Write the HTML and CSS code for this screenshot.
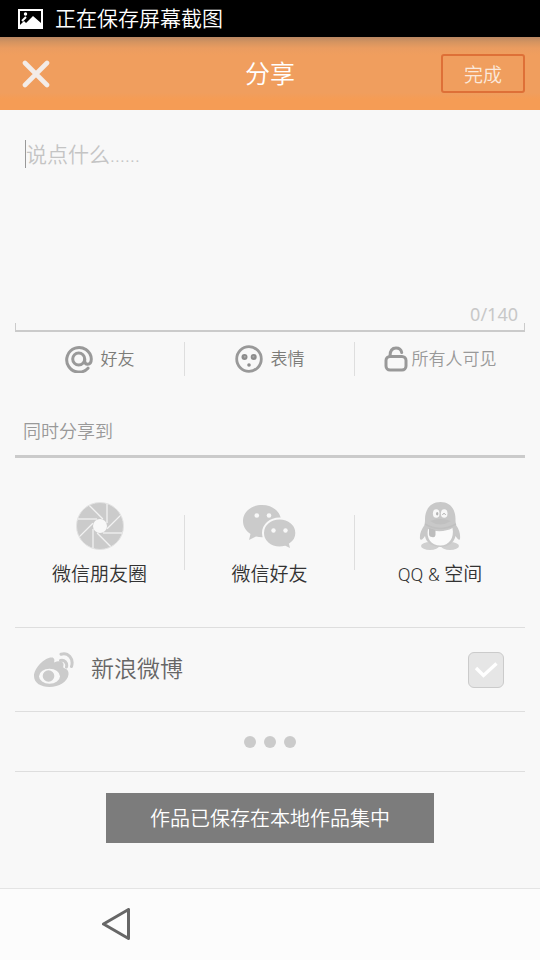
FILE: index.html
```html
<!DOCTYPE html>
<html lang="zh-CN">
<head>
<meta charset="utf-8">
<meta name="viewport" content="width=device-width, initial-scale=1">
<title>分享</title>
<link rel="stylesheet" href="styles.css">
</head>
<body>
<div class="status">
  <svg width="26" height="20" viewBox="0 0 26 20" aria-hidden="true">
    <rect x="1" y="1" width="23" height="18" fill="none" stroke="#fff" stroke-width="2"/>
    <path d="M2 18V16L6 12L8 14L15 7L23 14V18Z" fill="#fff"/>
    <path d="M4 12L8 8" stroke="#fff" stroke-width="2"/>
    <circle cx="7.500" cy="5" r="1.700" fill="#fff"/>
  </svg>
  <span>正在保存屏幕截图</span>
</div>
<header class="header">
  <button class="close" type="button" aria-label="关闭">
    <svg width="28" height="28" viewBox="0 0 28 28" aria-hidden="true">
      <path d="M3 3L25 25M25 3L3 25" stroke="#f3ece8" stroke-width="4.600" stroke-linecap="round"/>
    </svg>
  </button>
  <h1 class="title">分享</h1>
  <button class="done" type="button">完成</button>
</header>
<main class="main">
  <div class="compose">
    <textarea class="message" aria-label="说点什么" placeholder="说点什么......"></textarea>
    <div class="count">0/140</div>
    <div class="bracket"></div>
  </div>
  <div class="columns tools">
    <button class="tool" type="button">
      <svg width="28" height="28" viewBox="0 0 28 28" fill="none" stroke="#999" stroke-width="3" stroke-linecap="round" aria-hidden="true">
        <path d="M23 23.200A12.300 12.300 0 1 1 26.300 14C26.300 18 24.500 19.200 22.600 19.200C20.500 19.200 19.700 18 19.700 16V14"/>
        <circle cx="13.700" cy="14" r="6"/>
      </svg>
      <span>好友</span>
    </button>
    <button class="tool" type="button">
      <svg width="28" height="28" viewBox="0 0 28 28" aria-hidden="true">
        <circle cx="14" cy="14" r="12.300" fill="none" stroke="#999" stroke-width="2.800"/>
        <g fill="#8c8c8c"><circle cx="9.500" cy="12" r="3"/><circle cx="18.700" cy="12" r="3"/><circle cx="14" cy="20" r="1.800"/></g>
        <g fill="#aaa"><circle cx="9.800" cy="11.700" r="1"/><circle cx="18.400" cy="11.700" r="1"/></g>
      </svg>
      <span>表情</span>
    </button>
    <button class="tool tool-lock" type="button">
      <svg width="24" height="26" viewBox="0 0 24 26" fill="none" stroke="#999" stroke-width="3" stroke-linecap="round" aria-hidden="true">
        <rect x="2" y="10.500" width="20" height="13.500" rx="4"/>
        <path d="M6 10C6 5 8 2 12 2C15 2 17.200 3.800 17.700 6.500"/>
      </svg>
      <span>所有人可见</span>
    </button>
  </div>
  <h2 class="section">同时分享到</h2>
  <div class="columns targets">
    <button class="target" type="button">
      <svg width="50" height="50" viewBox="-25 -25 50 50" aria-hidden="true">
        <circle r="23.500" fill="#cbcbcb" stroke="#e4e4e4"/>
        <g stroke="#f2f2f2" stroke-width="1.300">
          <path d="M7 -22V-3"/>
          <path d="M7 -22V-3" transform="rotate(45)"/>
          <path d="M7 -22V-3" transform="rotate(90)"/>
          <path d="M7 -22V-3" transform="rotate(135)"/>
          <path d="M7 -22V-3" transform="rotate(180)"/>
          <path d="M7 -22V-3" transform="rotate(225)"/>
          <path d="M7 -22V-3" transform="rotate(270)"/>
          <path d="M7 -22V-3" transform="rotate(315)"/>
        </g>
        <circle r="7" fill="#f8f8f8"/>
      </svg>
      <span>微信朋友圈</span>
    </button>
    <button class="target" type="button">
      <svg width="56" height="50" viewBox="0 0 56 50" aria-hidden="true">
        <path d="M20 4C9 4 1 11 1 20C1 25.500 4 30 8.500 33L7 39L14 35.500C16 36 18 36.200 20 36.200C31 36.200 39 29 39 20C39 11 31 4 20 4Z" fill="#cbcbcb"/>
        <path d="M37.500 17.500C28 17.500 21 24 21 32C21 40 28 46.500 37.500 46.500C39.500 46.500 41.500 46.200 43.300 45.700L49.500 49L48 43C52 40.500 54.300 36.500 54.300 32C54.300 24 47 17.500 37.500 17.500Z" fill="#cbcbcb" stroke="#f8f8f8" stroke-width="2"/>
        <g fill="#f8f8f8"><circle cx="14.800" cy="14.500" r="2.300"/><circle cx="27" cy="14.500" r="2.300"/><circle cx="31.500" cy="29.500" r="2.200"/><circle cx="43.500" cy="29.500" r="2.200"/></g>
      </svg>
      <span>微信好友</span>
    </button>
    <button class="target" type="button">
      <svg width="44" height="50" viewBox="0 0 44 50" aria-hidden="true">
        <ellipse cx="12" cy="45" rx="9" ry="4" fill="#cfcfcf"/>
        <ellipse cx="32" cy="45" rx="9" ry="4" fill="#cfcfcf"/>
        <path d="M22.500 1C12 1 6.500 9 7 20L6.500 24C3 29 1.500 33 2 38C3 40 5 38 7 35C8 42 15 46 22.500 46C30 46 36 42 37.500 35C39.500 38 41.500 40 42 38C42.500 33 41.500 29 38 24L37.500 20C38 9 33 1 22.500 1Z" fill="#c8c8c8"/>
        <path d="M10 28C17 31 28 31 34.500 27C36.500 37 31 44.500 22.500 44.500C13 44.500 8 37 10 28Z" fill="#fafafa"/>
        <path d="M11 27L17.500 29V34Q17 37 14 36Q11 36 11 33Z" fill="#bdbdbd"/>
        <ellipse cx="18.200" cy="12.500" rx="3.300" ry="4.300" fill="#f8f8f8"/>
        <ellipse cx="26.200" cy="12.500" rx="3.300" ry="4.300" fill="#f8f8f8"/>
        <ellipse cx="19.200" cy="12.800" rx="1.200" ry="1.800" fill="#b4b4b4"/>
        <path d="M24.500 14Q26 10.500 27.600 14" fill="none" stroke="#b4b4b4"/>
        <path d="M12 20Q22 16 33 20Q22 27 12 20Z" fill="#c0c0c0"/>
        <path d="M7 23Q22 32 38 23" fill="none" stroke="#c0c0c0" stroke-width="1.500"/>
      </svg>
      <span>QQ &amp; 空间</span>
    </button>
  </div>
  <label class="weibo">
    <svg width="42" height="38" viewBox="0 0 42 38" aria-hidden="true">
      <path d="M19 6.500C21 6.500 22 9 21 11.500C25 9.500 30 9.500 30.500 13C30.700 15 29.500 16.500 31 17C34 18 36 20 35.500 23.500C34.500 31 26 36 16.500 36C8 36 1 32 1 25C1 17 12 6 19 6.500Z" fill="#cbcbcb"/>
      <ellipse cx="16.500" cy="25.200" rx="10.500" ry="7.500" fill="#f8f8f8"/>
      <circle cx="15.500" cy="25" r="5.800" fill="#cbcbcb"/>
      <path d="M28 3.200C35 1 41 7.500 38.500 15.500M27.500 9.500C31.500 8.500 34.500 12 33.500 16" fill="none" stroke="#cbcbcb" stroke-width="3" stroke-linecap="round"/>
    </svg>
    <span class="weibo-name">新浪微博</span>
    <span class="check">
      <input type="checkbox" checked>
      <svg width="24" height="18" viewBox="0 0 24 18" aria-hidden="true"><path d="M2 7L9.500 14.500L22.500 2.500" fill="none" stroke="#fff" stroke-width="3.400"/></svg>
    </span>
  </label>
  <button class="more" type="button" aria-label="更多"><i></i><i></i><i></i></button>
</main>
<div class="toast" role="status">作品已保存在本地作品集中</div>
<nav class="nav">
  <button class="back" type="button" aria-label="返回">
    <svg width="30" height="34" viewBox="0 0 30 34" aria-hidden="true"><path d="M2.500 16L27.500 1.500V30.500Z" fill="none" stroke="#666" stroke-width="3" stroke-linejoin="round"/></svg>
  </button>
</nav>
</body>
</html>
```
FILE: styles.css
```css
* { box-sizing: border-box; }
body {
  margin: 0;
  min-height: 100vh;
  display: flex;
  flex-direction: column;
  background: #f8f8f8;
  color: #333;
  font-family: Roboto, "Noto Sans CJK SC DemiLight", "Noto Sans CJK SC", sans-serif;
  font-weight: 350;
}
button {
  margin: 0;
  padding: 0;
  border: 0;
  background: none;
  color: inherit;
  font: inherit;
}
svg { display: block; flex: none; }

.status {
  height: 37px;
  display: flex;
  align-items: center;
  gap: 11px;
  padding-left: 18px;
  background: #000;
  color: #fff;
  font-size: 21px;
  line-height: 26px;
}

.header {
  height: 73px;
  display: grid;
  grid-template-columns: 1fr auto 1fr;
  align-items: center;
  padding: 0 15px;
  background: linear-gradient(#b98763 0, #d59460 5px, #ea9c60 11px, #f09e5e 18px, #f09e5e 56px, #f59c55 62px);
  color: #fff;
}
.close {
  justify-self: start;
  margin-left: 7px;
}
.title {
  margin: 0;
  padding-top: 2px;
  font-size: 25px;
  line-height: 30px;
  font-weight: inherit;
}
.done {
  justify-self: end;
  width: 84px;
  height: 39px;
  border: 2px solid #de7037;
  border-radius: 3px;
  color: #fbe9dc;
  font-size: 19px;
}

.main {
  flex: 1;
  padding: 0 15px;
}
.compose {
  position: relative;
  padding-top: 30px;
}
.compose::before {
  content: "";
  position: absolute;
  left: 10px;
  top: 30px;
  width: 1px;
  height: 28px;
  background: #999;
}
.message {
  display: block;
  width: 100%;
  height: 162px;
  padding: 0 11px;
  border: 0;
  outline: 0;
  resize: none;
  background: none;
  font: inherit;
  font-size: 21px;
  line-height: 30px;
}
.message::placeholder { color: #c4c4c4; }
.count {
  padding-right: 7px;
  text-align: right;
  color: #c8c8c8;
  font-family: "Noto Sans", sans-serif;
  font-size: 18px;
  line-height: 24px;
  font-weight: 400;
}
.bracket {
  height: 9px;
  margin-top: -3px;
  border: solid #cbcbcb;
  border-width: 0 1px 2px;
}

.columns {
  display: grid;
  grid-template-columns: repeat(3, 1fr);
}
.columns > button { border-right: 1px solid #dedede; }
.columns > button:last-child { border-right: 0; }
.tools {
  margin-top: 10px;
  font-size: 17px;
  line-height: 26px;
  color: #7c7c78;
}
.tool {
  height: 34px;
  display: flex;
  align-items: center;
  justify-content: center;
  gap: 8px;
}
.tool-lock { gap: 4px; color: #999; }

.section {
  margin: 42px 0 0;
  padding: 0 8px 9px;
  border-bottom: 3px solid #cbcbcb;
  color: #999;
  font-size: 18px;
  line-height: 28px;
  font-weight: inherit;
}

.targets {
  padding: 57px 0;
  border-bottom: 1px solid #dedede;
  font-size: 19px;
  line-height: 28px;
}
.target {
  height: 55px;
  display: flex;
  flex-direction: column;
  align-items: center;
  justify-content: center;
  gap: 10px;
  padding-top: 4px;
}

.weibo {
  height: 84px;
  display: flex;
  align-items: center;
  padding: 0 21px 0 18px;
  border-bottom: 1px solid #dedede;
  color: #666;
  font-size: 23px;
  line-height: 30px;
}
.weibo-name {
  flex: 1;
  margin-left: 16px;
}
.check {
  display: grid;
  place-items: center;
}
.check > * { grid-area: 1 / 1; }
.check input {
  appearance: none;
  width: 36px;
  height: 36px;
  margin: 0;
  border: 1px solid #cbcbcb;
  border-radius: 6px;
  background: #e6e6e6;
}
.check svg { visibility: hidden; pointer-events: none; z-index: 1; }
.check input:checked + svg { visibility: visible; }

.more {
  width: 100%;
  height: 60px;
  display: flex;
  align-items: center;
  justify-content: center;
  gap: 8px;
  border-bottom: 1px solid #dedede;
}
.more i {
  width: 12px;
  height: 12px;
  border-radius: 50%;
  background: #cbcbcb;
}

.toast {
  position: fixed;
  left: 50%;
  bottom: 117px;
  transform: translateX(-50%);
  padding: 12px 44px 10px;
  background: #7c7c7c;
  color: #fff;
  font-size: 20px;
  line-height: 28px;
  white-space: nowrap;
}

.nav {
  height: 72px;
  display: flex;
  align-items: center;
  padding-left: 101px;
  border-top: 1px solid #e4e4e4;
  background: #fcfcfc;
}
```
